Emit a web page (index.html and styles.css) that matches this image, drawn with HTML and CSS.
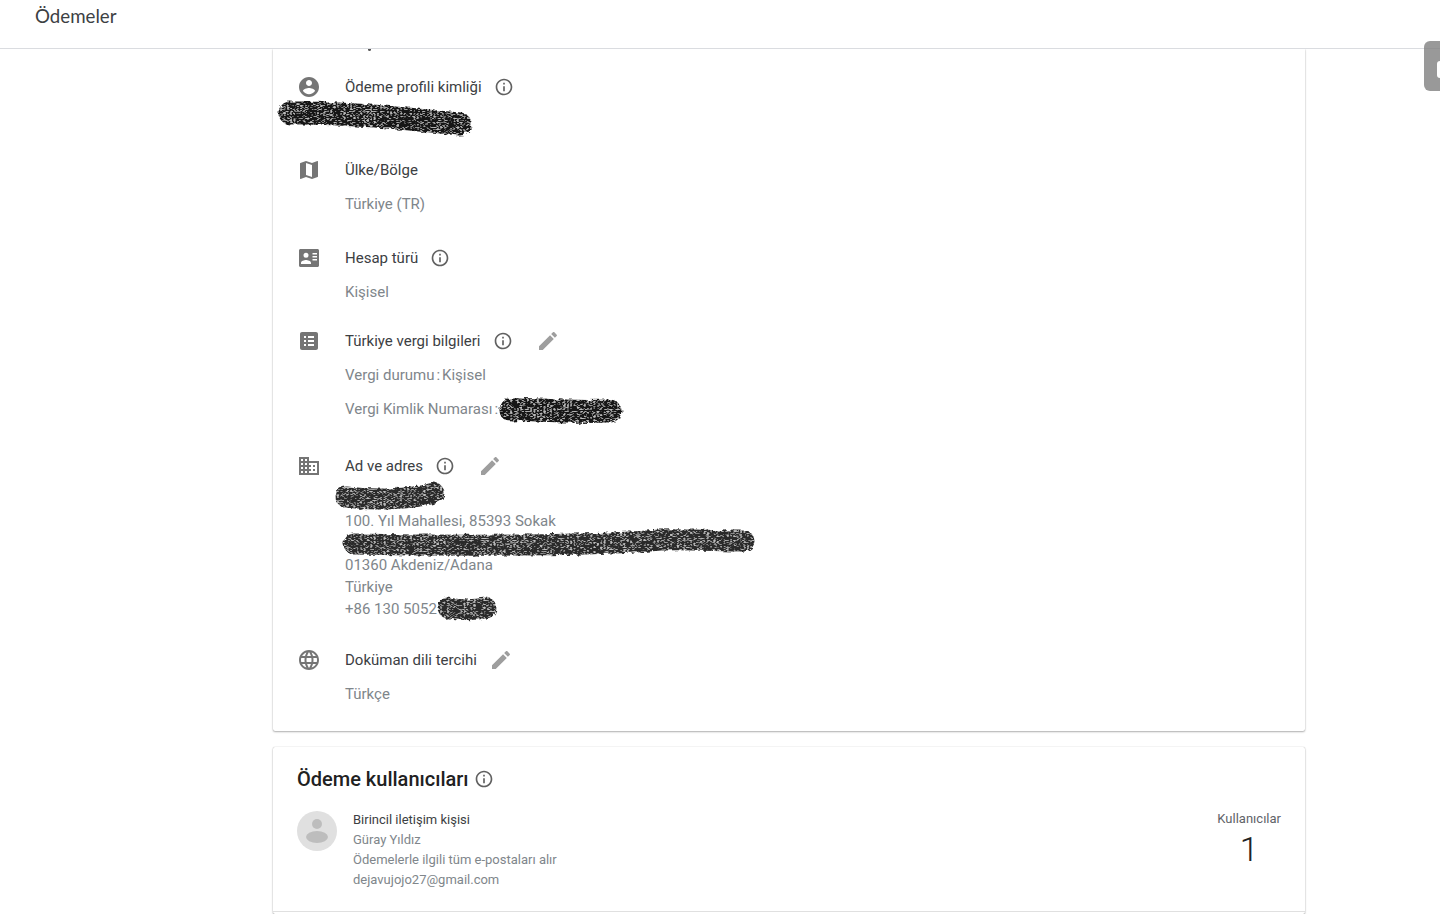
FILE: index.html
```html
<!DOCTYPE html>
<html lang="en">
<head>
  <meta charset="UTF-8" />
  <meta name="viewport" content="width=device-width, initial-scale=1.0"/>
  <title>Ödemeler</title>
  <link rel="stylesheet" href="styles.css">
</head>
<body>
  <!-- Top bar -->
  <header class="topbar">Ödemeler</header>

  <!-- Feedback tab -->
  <div class="side-tab"><span class="side-tab-glyph"></span></div>

  <main class="content">
    <!-- Profile card -->
    <section class="card card-profile">
      <span class="cut-text"></span>

      <div class="info-row row-id">
        <svg class="row-icon" viewBox="0 0 24 24"><path d="M12 2C6.48 2 2 6.48 2 12s4.48 10 10 10 10-4.48 10-10S17.52 2 12 2zm0 3c1.66 0 3 1.34 3 3s-1.34 3-3 3-3-1.34-3-3 1.34-3 3-3zm0 14.2c-2.5 0-4.71-1.28-6-3.22.03-1.99 4-3.08 6-3.08 1.99 0 5.97 1.09 6 3.08-1.29 1.94-3.5 3.22-6 3.22z"/></svg>
        <div class="row-body">
          <div class="row-title">Ödeme profili kimliği
            <svg class="info-icon" viewBox="0 0 24 24"><path d="M11 7h2v2h-2zm0 4h2v6h-2zm1-9C6.48 2 2 6.48 2 12s4.48 10 10 10 10-4.48 10-10S17.52 2 12 2zm0 18c-4.41 0-8-3.59-8-8s3.59-8 8-8 8 3.59 8 8-3.59 8-8 8z"/></svg>
          </div>
          <div class="row-value value-tight">&nbsp;</div>
        </div>
      </div>

      <div class="info-row row-country">
        <svg class="row-icon" viewBox="0 0 24 24"><path d="M20.5 3l-.16.03L15 5.1 9 3 3.36 4.9c-.21.07-.36.25-.36.48V20.5c0 .28.22.5.5.5l.16-.03L9 18.9l6 2.1 5.64-1.9c.21-.07.36-.25.36-.48V3.5c0-.28-.22-.5-.5-.5zM15 19l-6-2.11V5l6 2.11V19z"/></svg>
        <div class="row-body">
          <div class="row-title">Ülke/Bölge</div>
          <div class="row-value">Türkiye (TR)</div>
        </div>
      </div>

      <div class="info-row row-type">
        <svg class="row-icon" viewBox="0 0 24 24"><path fill-rule="evenodd" d="M3.5 3h17c.83 0 1.5.67 1.5 1.5v15c0 .83-.67 1.5-1.5 1.5h-17c-.83 0-1.5-.67-1.5-1.5v-15C2 3.670 2.670 3 3.500 3zM9 6.800a2.500 2.500 0 1 0 0 5 2.500 2.500 0 0 0 0-5zM4 18h10v-1.200c0-1.800-3.300-2.800-5-2.800s-5 1-5 2.800zM15.500 7v1.500H20V7zm0 3v1.500H20V10zm0 3v1.500H20V13z"/></svg>
        <div class="row-body">
          <div class="row-title">Hesap türü
            <svg class="info-icon" viewBox="0 0 24 24"><path d="M11 7h2v2h-2zm0 4h2v6h-2zm1-9C6.48 2 2 6.48 2 12s4.48 10 10 10 10-4.48 10-10S17.52 2 12 2zm0 18c-4.41 0-8-3.59-8-8s3.59-8 8-8 8 3.59 8 8-3.59 8-8 8z"/></svg>
          </div>
          <div class="row-value">Kişisel</div>
        </div>
      </div>

      <div class="info-row row-tax">
        <svg class="row-icon" viewBox="0 0 24 24"><path fill-rule="evenodd" d="M5 3h14c1.100 0 2 .9 2 2v14c0 1.100-.9 2-2 2H5c-1.100 0-2-.9-2-2V5c0-1.100.9-2 2-2zm2 4v2h2V7zm4 0v2h6V7zm-4 4v2h2v-2zm4 0v2h6v-2zm-4 4v2h2v-2zm4 0v2h6v-2z"/></svg>
        <div class="row-body">
          <div class="row-title">Türkiye vergi bilgileri
            <svg class="info-icon" viewBox="0 0 24 24"><path d="M11 7h2v2h-2zm0 4h2v6h-2zm1-9C6.48 2 2 6.48 2 12s4.48 10 10 10 10-4.48 10-10S17.52 2 12 2zm0 18c-4.41 0-8-3.59-8-8s3.59-8 8-8 8 3.59 8 8-3.59 8-8 8z"/></svg>
            <svg class="edit-icon" viewBox="0 0 24 24"><path d="M3 17.250V21h3.750L17.810 9.940l-3.750-3.750L3 17.250zM20.710 7.040c.39-.39.39-1.020 0-1.410l-2.340-2.340c-.39-.39-1.020-.39-1.410 0l-1.830 1.830 3.750 3.750 1.830-1.830z"/></svg>
          </div>
          <div class="row-value">Vergi durumu<span class="colon">:</span>Kişisel</div>
          <div class="row-value value-next">Vergi Kimlik Numarası<span class="colon">:</span></div>
        </div>
      </div>

      <div class="info-row row-address">
        <svg class="row-icon" viewBox="0 0 24 24"><path d="M12 7V3H2v18h20V7H12zM6 19H4v-2h2v2zm0-4H4v-2h2v2zm0-4H4V9h2v2zm0-4H4V5h2v2zm4 12H8v-2h2v2zm0-4H8v-2h2v2zm0-4H8V9h2v2zm0-4H8V5h2v2zm10 12h-8v-2h2v-2h-2v-2h2v-2h-2V9h8v10zm-2-8h-2v2h2v-2zm0 4h-2v2h2v-2z"/></svg>
        <div class="row-body">
          <div class="row-title">Ad ve adres
            <svg class="info-icon" viewBox="0 0 24 24"><path d="M11 7h2v2h-2zm0 4h2v6h-2zm1-9C6.48 2 2 6.48 2 12s4.48 10 10 10 10-4.48 10-10S17.52 2 12 2zm0 18c-4.41 0-8-3.59-8-8s3.59-8 8-8 8 3.59 8 8-3.59 8-8 8z"/></svg>
            <svg class="edit-icon" viewBox="0 0 24 24"><path d="M3 17.250V21h3.750L17.810 9.940l-3.750-3.750L3 17.250zM20.710 7.040c.39-.39.39-1.020 0-1.410l-2.340-2.340c-.39-.39-1.020-.39-1.410 0l-1.830 1.830 3.750 3.750 1.830-1.830z"/></svg>
          </div>
          <div class="address-lines">
            <div>&nbsp;</div>
            <div>100. Yıl Mahallesi, 85393 Sokak</div>
            <div>&nbsp;</div>
            <div>01360 Akdeniz/Adana</div>
            <div>Türkiye</div>
            <div>+86 130 5052</div>
          </div>
        </div>
      </div>

      <div class="info-row row-lang">
        <svg class="row-icon" viewBox="0 0 24 24"><path d="M11.99 2C6.47 2 2 6.48 2 12s4.47 10 9.99 10C17.52 22 22 17.52 22 12S17.52 2 11.99 2zm6.93 6h-2.95c-.32-1.25-.78-2.45-1.38-3.56 1.84.63 3.37 1.91 4.33 3.56zM12 4.04c.83 1.2 1.48 2.53 1.91 3.96h-3.82c.43-1.43 1.08-2.76 1.91-3.96zM4.26 14C4.1 13.36 4 12.69 4 12s.1-1.36.26-2h3.38c-.08.66-.14 1.32-.14 2 0 .68.06 1.34.14 2H4.26zm.82 2h2.95c.32 1.25.78 2.45 1.38 3.56-1.84-.63-3.37-1.9-4.33-3.56zm2.95-8H5.08c.96-1.66 2.49-2.93 4.33-3.56C8.81 5.55 8.35 6.75 8.03 8zM12 19.96c-.83-1.2-1.48-2.53-1.91-3.96h3.82c-.43 1.43-1.08 2.76-1.91 3.96zM14.34 14H9.66c-.09-.66-.16-1.32-.16-2 0-.68.07-1.35.16-2h4.68c.09.65.16 1.32.16 2 0 .68-.07 1.34-.16 2zm.25 5.56c.6-1.11 1.06-2.31 1.38-3.56h2.95c-.96 1.65-2.49 2.93-4.33 3.56zM16.36 14c.08-.66.14-1.32.14-2 0-.68-.06-1.34-.14-2h3.38c.16.64.26 1.31.26 2s-.1 1.36-.26 2h-3.38z"/></svg>
        <div class="row-body">
          <div class="row-title">Doküman dili tercihi
            <svg class="edit-icon edit-only" viewBox="0 0 24 24"><path d="M3 17.250V21h3.750L17.810 9.940l-3.750-3.750L3 17.250zM20.710 7.040c.39-.39.39-1.020 0-1.410l-2.340-2.340c-.39-.39-1.020-.39-1.410 0l-1.830 1.830 3.750 3.750 1.830-1.830z"/></svg>
          </div>
          <div class="row-value">Türkçe</div>
        </div>
      </div>
    </section>

    <!-- Users card -->
    <section class="card card-users">
      <h2 class="users-title">Ödeme kullanıcıları
        <svg class="info-icon" viewBox="0 0 24 24"><path d="M11 7h2v2h-2zm0 4h2v6h-2zm1-9C6.48 2 2 6.48 2 12s4.48 10 10 10 10-4.48 10-10S17.52 2 12 2zm0 18c-4.41 0-8-3.59-8-8s3.59-8 8-8 8 3.59 8 8-3.59 8-8 8z"/></svg>
      </h2>
      <div class="user-row">
        <svg class="avatar" viewBox="0 0 40 40">
          <circle cx="20" cy="20" r="20" fill="#e0e0e0"/>
          <circle cx="20" cy="13" r="5" fill="#bdbdbd"/>
          <ellipse cx="20" cy="26" rx="11" ry="6" fill="#bdbdbd"/>
        </svg>
        <div class="user-text">
          <div class="user-role">Birincil iletişim kişisi</div>
          <div>Güray Yıldız</div>
          <div>Ödemelerle ilgili tüm e-postaları alır</div>
          <div>dejavujojo27@gmail.com</div>
        </div>
        <div class="user-count">
          <div class="user-count-label">Kullanıcılar</div>
          <div class="user-count-num">1</div>
        </div>
      </div>
      <div class="users-divider"></div>
    </section>
  </main>

  <!-- Marker scribbles over the private values -->
  <svg class="scribbles" viewBox="0 0 1440 914">
    <defs>
      <filter id="marker" x="-5%" y="-60%" width="110%" height="220%">
        <feTurbulence type="fractalNoise" baseFrequency="0.22" numOctaves="2" seed="4" result="noise"/>
        <feDisplacementMap in="SourceGraphic" in2="noise" scale="5" result="rough"/>
        <feTurbulence type="turbulence" baseFrequency="0.3 0.55" numOctaves="1" seed="9"/>
        <feColorMatrix type="matrix" values="0 0 0 0 0.5  0 0 0 0 0.5  0 0 0 0 0.5  0 0 0 3 -0.45"/>
        <feComposite in2="rough" operator="in" result="specks"/>
        <feMerge result="merged">
          <feMergeNode in="rough"/>
          <feMergeNode in="specks"/>
        </feMerge>
        <feGaussianBlur in="merged" stdDeviation="0.6"/>
      </filter>
    </defs>
    <g class="scribble-strokes" filter="url(#marker)">
      <path class="stroke-wide" d="M290 113C340 112 400 118 460 124"/>
      <path class="stroke-wide" d="M511 410C530 408 560 413 610 411"/>
      <path class="stroke-mid stroke-soft" d="M346 497C370 500 410 500 434 493"/>
      <path class="stroke-mid stroke-soft" d="M354 544C450 546 600 546 660 540C690 539 720 541 744 541"/>
      <path class="stroke-mid stroke-soft" d="M448 608C460 610 475 610 486 608"/>
    </g>
  </svg>
</body>
</html>
```

FILE: styles.css
```css
* {
  box-sizing: border-box;
}

body {
  margin: 0;
  height: 100vh;
  overflow: hidden;
  background: white;
  font-family: Roboto, 'Noto Sans', sans-serif;
  color: #3c4043;
}

.topbar {
  position: relative;
  z-index: 2;
  height: 49px;
  padding: 4px 0 0 35px;
  background: white;
  border-bottom: 1px solid #dadce0;
  font-family: Lato, sans-serif;
  font-size: 18.7px;
  line-height: 24px;
  color: #3c4043;
}

.side-tab {
  position: absolute;
  top: 41px;
  right: 0;
  width: 16px;
  height: 50px;
  z-index: 3;
  overflow: hidden;
  background: rgba(128, 128, 128, 0.8);
  border-radius: 6px 0 0 6px;
}

.side-tab-glyph {
  position: absolute;
  top: 20px;
  left: 13px;
  width: 14px;
  height: 17px;
  background: white;
  border-radius: 3px;
}

.content {
  width: 1032px;
  margin-left: 273px;
}

.card {
  position: relative;
  background: white;
  box-shadow: 0 1px 2px rgba(0, 0, 0, 0.3), 0 0 1px rgba(0, 0, 0, 0.3);
  border-radius: 2px;
}

.card-profile {
  padding: 26px 24px 26px;
  border-radius: 0 0 2px 2px;
}

.cut-text {
  position: absolute;
  top: 0;
  left: 95px;
  width: 3px;
  height: 2px;
  background: #555;
  border-radius: 0 0 2px 2px;
}

.info-row {
  display: flex;
}

.row-id { margin-bottom: 32px; }
.row-country { margin-bottom: 31px; }
.row-type { margin-bottom: 26px; }
.row-tax { margin-bottom: 34px; }
.row-address { margin-bottom: 28px; }

.row-icon {
  flex: none;
  width: 24px;
  height: 24px;
  margin-right: 24px;
  fill: #757575;
}

.row-title {
  display: flex;
  align-items: center;
  height: 24px;
  font-size: 15px;
  color: #3c4043;
}

.row-value {
  margin-top: 11px;
  font-size: 15px;
  line-height: 22px;
  color: #80868b;
}

.value-tight {
  margin-top: 5px;
}

.value-next {
  margin-top: 12px;
}

.colon {
  margin: 0 2px;
}

.address-lines {
  margin-top: 10px;
  font-size: 15px;
  line-height: 22px;
  color: #80868b;
}

.info-icon {
  flex: none;
  width: 20px;
  height: 20px;
  margin-left: 12px;
  fill: #616161;
}

.edit-icon {
  flex: none;
  width: 24px;
  height: 24px;
  margin-left: 23px;
  fill: #9e9e9e;
}

.edit-only {
  margin-left: 12px;
}

.card-users {
  margin-top: 16px;
  padding: 20px 24px 0;
}

.users-title {
  display: flex;
  align-items: center;
  margin: 0;
  height: 24px;
  font-size: 20px;
  font-weight: 500;
  color: #212121;
}

.users-title .info-icon {
  margin-left: 5px;
}

.user-row {
  display: flex;
  margin-top: 19px;
  padding-bottom: 21px;
}

.avatar {
  flex: none;
  width: 40px;
  height: 40px;
  margin: 1px 16px 0 0;
}

.user-text {
  flex: 1;
  font-size: 13px;
  line-height: 20px;
  color: #80868b;
}

.user-role {
  color: #3c4043;
}

.user-count {
  margin-top: -1px;
  text-align: center;
}

.user-count-label {
  font-size: 13px;
  line-height: 20px;
  color: #5f6368;
}

.user-count-num {
  font-size: 34px;
  font-weight: 300;
  line-height: 40px;
  color: #212121;
}

.users-divider {
  height: 3px;
  margin: 0 -24px;
  border-top: 1px solid #e0e0e0;
}

.scribbles {
  position: absolute;
  top: 0;
  left: 0;
  width: 1440px;
  height: 914px;
  pointer-events: none;
}

.scribble-strokes path {
  fill: none;
  stroke: #161616;
  stroke-linecap: round;
}

.stroke-wide {
  stroke-width: 23;
}

.stroke-mid {
  stroke-width: 21;
}

.scribble-strokes .stroke-soft {
  stroke: #2a2a2a;
}
```
